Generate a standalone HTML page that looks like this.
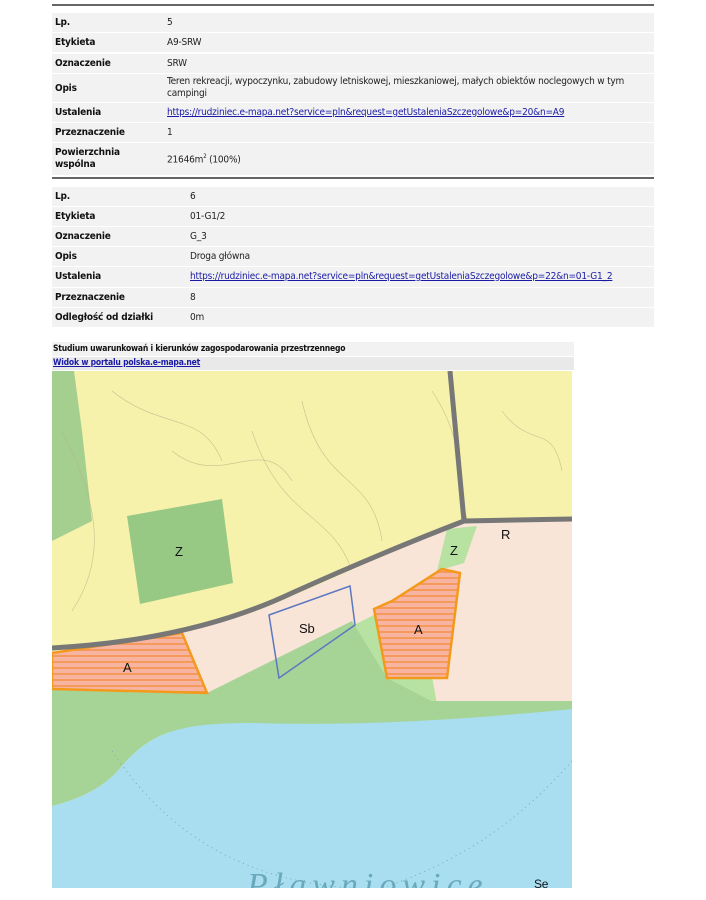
<!DOCTYPE html>
<html><head><meta charset="utf-8"><style>
*{margin:0;padding:0;box-sizing:border-box}
body{width:706px;height:900px;background:#fff;font-family:"DejaVu Sans Condensed","DejaVu Sans","Liberation Sans",sans-serif;font-size:10px;letter-spacing:-0.2px;color:#222;position:relative;overflow:hidden}
.rule{position:absolute;left:52px;width:602px;height:2px;background:#666}
.t{position:absolute;left:52px;width:602px}
.r{position:absolute;left:0;width:602px;background:#f2f2f2}
.l{position:absolute;left:3px;font-weight:bold;color:#111}
.v{position:absolute}
a{color:#1a1aa6;text-decoration:underline}
</style></head><body>
<div class="rule" style="top:4px"></div>
<div class="t" style="top:0">
 <div class="r" style="top:13px;height:19px"><span class="l" style="top:4px">Lp.</span><span class="v" style="left:115px;top:4px">5</span></div>
 <div class="r" style="top:33px;height:19px"><span class="l" style="top:4px">Etykieta</span><span class="v" style="left:115px;top:4px">A9-SRW</span></div>
 <div class="r" style="top:54px;height:19px"><span class="l" style="top:4px">Oznaczenie</span><span class="v" style="left:115px;top:4px">SRW</span></div>
 <div class="r" style="top:74px;height:28px"><span class="l" style="top:9px">Opis</span><span class="v" style="left:115px;top:2px;width:480px;line-height:12px">Teren rekreacji, wypoczynku, zabudowy letniskowej, mieszkaniowej, małych obiektów noclegowych w tym campingi</span></div>
 <div class="r" style="top:103px;height:19px"><span class="l" style="top:4px">Ustalenia</span><span class="v" style="left:115px;top:4px"><a>https://rudziniec.e-mapa.net?service=pln&amp;request=getUstaleniaSzczegolowe&amp;p=20&amp;n=A9</a></span></div>
 <div class="r" style="top:123px;height:19px"><span class="l" style="top:4px">Przeznaczenie</span><span class="v" style="left:115px;top:4px">1</span></div>
 <div class="r" style="top:143px;height:32px"><span class="l" style="top:4px;line-height:12px">Powierzchnia<br>wspólna</span><span class="v" style="left:115px;top:10px">21646m<sup style="font-size:6px">2</sup> (100%)</span></div>
</div>
<div class="rule" style="top:177px"></div>
<div class="t" style="top:0">
 <div class="r" style="top:187px;height:19px"><span class="l" style="top:4px">Lp.</span><span class="v" style="left:138px;top:4px">6</span></div>
 <div class="r" style="top:207px;height:19px"><span class="l" style="top:4px">Etykieta</span><span class="v" style="left:138px;top:4px">01-G1/2</span></div>
 <div class="r" style="top:227px;height:19px"><span class="l" style="top:4px">Oznaczenie</span><span class="v" style="left:138px;top:4px">G_3</span></div>
 <div class="r" style="top:247px;height:19px"><span class="l" style="top:4px">Opis</span><span class="v" style="left:138px;top:4px">Droga główna</span></div>
 <div class="r" style="top:267px;height:20px"><span class="l" style="top:4px">Ustalenia</span><span class="v" style="left:138px;top:4px"><a>https://rudziniec.e-mapa.net?service=pln&amp;request=getUstaleniaSzczegolowe&amp;p=22&amp;n=01-G1_2</a></span></div>
 <div class="r" style="top:288px;height:19px"><span class="l" style="top:4px">Przeznaczenie</span><span class="v" style="left:138px;top:4px">8</span></div>
 <div class="r" style="top:308px;height:19px"><span class="l" style="top:4px">Odległość od działki</span><span class="v" style="left:138px;top:4px">0m</span></div>
</div>
<div style="position:absolute;left:52px;top:342px;width:522px;height:14px;background:#f2f2f2;font-size:8.5px;font-weight:bold;padding:2px 1px;color:#111">Studium uwarunkowań i kierunków zagospodarowania przestrzennego</div>
<div style="position:absolute;left:52px;top:357px;width:522px;height:13px;background:#e9e9e9;font-size:8.5px;font-weight:bold;padding:1px 1px"><a>Widok w portalu polska.e-mapa.net</a></div>
<svg style="position:absolute;left:52px;top:371px" width="520" height="517" viewBox="0 0 520 517" font-family="Liberation Sans,sans-serif">
<defs><pattern id="h" width="6" height="6" patternUnits="userSpaceOnUse"><rect width="6" height="6" fill="#f7b4a0"/><rect width="6" height="2" y="2" fill="#f59a5a"/></pattern></defs>
<rect width="520" height="517" fill="#f6f2ab"/>
<path d="M0 0H22L30 60L40 150L10 165L0 170Z" fill="#a4cf8e"/>
<path d="M75 145L170 128L181 212L88 233Z" fill="#8dc47f" opacity=".9"/>
<g fill="none" stroke="#b8b58a" stroke-width=".6" opacity=".8">
<path d="M10 60C40 120 60 180 20 240M60 20C110 60 150 40 170 90M120 80C170 120 210 60 240 110M250 30C270 120 320 100 330 170M380 20C420 80 400 120 420 160M450 40C480 80 500 50 510 100M200 60C230 150 280 140 300 200"/>
</g>
<path d="M0 280C80 275 170 258 240 225C300 200 360 170 410 152L520 150V335L385 333L300 320L200 330L0 318Z" fill="#f9e4d8"/>
<path d="M395 158L425 155L412 192L385 200Z" fill="#b7e2a2"/>
<path d="M300 255L330 240L335 307L380 306L385 333L300 330L200 330Z" fill="#b7e2a2"/>
<path d="M0 318L155 322L300 250L335 307L385 333L520 335V360L0 360Z" fill="#a6d497"/>
<path d="M0 330H520V345C400 350 300 355 200 352C130 352 100 360 70 395C50 420 20 430 0 435Z" fill="#a6d497"/>
<path d="M0 435C20 430 50 420 70 395C100 360 130 352 200 352C300 355 400 350 520 338V517H0Z" fill="#a8def0"/>
<path d="M60 380C120 470 200 510 300 517M520 390C450 470 380 500 330 517" fill="none" stroke="#7aa" stroke-width="1" stroke-dasharray="1 4"/>
<path d="M0 282L130 262L155 322L0 318Z" fill="url(#h)" stroke="#f39a1c" stroke-width="2.5"/>
<path d="M322 238L340 230L390 198L408 202L395 307L335 307Z" fill="url(#h)" stroke="#f39a1c" stroke-width="2.5"/>
<path d="M217 244L298 215L303 254L227 307Z" fill="none" stroke="#5a78c0" stroke-width="1.5"/>
<path d="M0 277C90 272 170 255 240 222C300 195 360 170 412 150L398 0M412 150L520 148" fill="none" stroke="#777" stroke-width="5"/>
<g font-size="13" fill="#111"><text x="123" y="185">Z</text><text x="247" y="262">Sb</text><text x="71" y="301">A</text><text x="362" y="263">A</text><text x="398" y="184">Z</text><text x="449" y="168">R</text><text x="482" y="517" font-size="12">Se</text></g>
<text x="195" y="525" font-family="Liberation Serif,serif" font-style="italic" font-size="34" fill="#6aa8bd" letter-spacing="6">Pławniowice</text>
</svg>
</body></html>
